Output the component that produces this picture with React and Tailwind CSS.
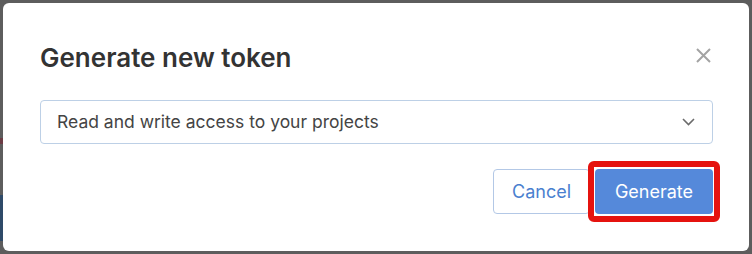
import React from 'react';

const App = () => {
  return (
    <div className="relative w-[752px] h-[254px] overflow-hidden bg-[#5d5d5d] font-['Inter','Liberation_Sans',sans-serif]">
      {/* page hints behind the overlay */}
      <div className="absolute left-0 top-[138px] w-[3px] h-[6px] bg-[#6b3c44]" />
      <div className="absolute left-0 top-[195px] w-[3px] h-[46px] bg-[#2f4a68]" />

      <div className="relative ml-[3px] mt-[3px] w-[746px] h-[248px] rounded-[6px] bg-white px-[37px] pt-[38px]">
        <div className="flex items-start justify-between">
          <h2 className="text-[26px] leading-[34px] font-semibold text-[#333333]">
            Generate new token
          </h2>
          <button className="mt-[7px] mr-[1px] text-[#a3a3a3]">
            <svg width="15" height="15" viewBox="0 0 15 15" fill="none" stroke="currentColor" strokeWidth="2">
              <path d="M1 1l13 13M14 1L1 14" />
            </svg>
          </button>
        </div>

        <div className="mt-[25px] flex h-[44px] w-[673px] items-center justify-between rounded-[4px] border border-[#bdd0e6] pl-[16px] pr-[17px]">
          <span className="text-[17.5px] text-[#444444]">Read and write access to your projects</span>
          <svg width="13" height="8" viewBox="0 0 13 8" fill="none" stroke="#6b6b6b" strokeWidth="1.6">
            <path d="M1 1l5.5 5.5L12 1" />
          </svg>
        </div>

        <div className="mt-[25px] flex w-[673px] justify-end gap-[5px]">
          <button className="h-[45px] w-[97px] rounded-[4px] border border-[#b3c8e6] bg-white text-[18px] text-[#4a7fcf]">
            Cancel
          </button>
          <div className="relative">
            <button className="h-[45px] w-[118px] rounded-[4px] bg-[#5589da] text-[18px] text-white">
              Generate
            </button>
            <div className="pointer-events-none absolute -left-[7px] -right-[7px] -top-[8px] -bottom-[8px] rounded-[6px] border-[6px] border-[#e5130f]" />
          </div>
        </div>
      </div>
    </div>
  );
};

export default App;
